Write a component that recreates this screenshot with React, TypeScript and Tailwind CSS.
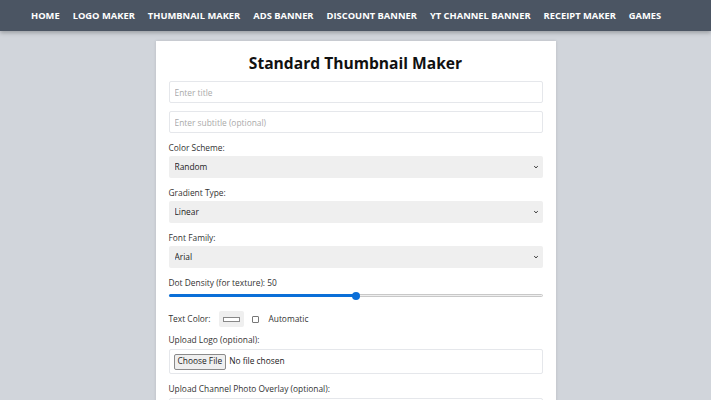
import { useState } from 'react';

const navItems = [
  'HOME',
  'LOGO MAKER',
  'THUMBNAIL MAKER',
  'ADS BANNER',
  'DISCOUNT BANNER',
  'YT CHANNEL BANNER',
  'RECEIPT MAKER',
  'GAMES',
];

function Chevron() {
  return (
    <svg
      className="pointer-events-none absolute right-[4px] top-1/2 -translate-y-1/2"
      width="6"
      height="4"
      viewBox="0 0 6 4"
    >
      <path d="M1.2 1.2l1.8 1.6 1.8-1.6" fill="none" stroke="#333" strokeWidth="1" />
    </svg>
  );
}

function SelectField({ label, value, options }: { label: string; value: string; options: string[] }) {
  return (
    <div className="mb-[9px]">
      <label className="block leading-[12px] mb-[2px] text-[#333]">{label}</label>
      <div className="relative">
        <select
          defaultValue={value}
          className="w-full h-[22px] appearance-none bg-[#efefef] rounded-[2px] pl-[6px] text-[#222] outline-none"
        >
          {options.map((o) => (
            <option key={o}>{o}</option>
          ))}
        </select>
        <Chevron />
      </div>
    </div>
  );
}

function FileField({ label }: { label: string }) {
  return (
    <div className="mb-[9px]">
      <label className="block leading-[12px] mb-[3px] text-[#333]">{label}</label>
      <div className="h-[25px] border border-[#e5e7eb] rounded-[2px] flex items-center px-[4px] text-[#222]">
        <span className="h-[16px] px-[3px] flex items-center bg-[#efefef] border border-[#8a8a8a] rounded-[2px]">
          Choose File
        </span>
        <span className="ml-[3px]">No file chosen</span>
      </div>
    </div>
  );
}

export default function App() {
  const [density] = useState(50);

  return (
    <div className="min-h-screen bg-[#d1d5db] text-[8.4px]" style={{ fontFamily: '"Open Sans", sans-serif' }}>
      <nav className="h-[31px] bg-[#4b5563] shadow-[0_2px_4px_rgba(0,0,0,0.25)] flex items-center pl-[31px] pt-[1px] gap-[13px]">
        {navItems.map((item) => (
          <a key={item} href="#" className="text-white font-bold text-[9.35px]">
            {item}
          </a>
        ))}
      </nav>

      <div className="w-[400px] mx-auto mt-[10px] bg-white shadow-[0_0_3px_rgba(0,0,0,0.12)] px-[13px] pt-[10px] pb-4">
        <h1 className="text-center font-bold text-[15.6px] leading-[24px] text-[#111] mb-[6px]">
          Standard Thumbnail Maker
        </h1>

        <input
          placeholder="Enter title"
          className="block w-full h-[22px] border border-[#e5e7eb] rounded-[2px] px-[5px] mb-[8px] placeholder:text-[#aaa] outline-none"
        />
        <input
          placeholder="Enter subtitle (optional)"
          className="block w-full h-[22px] border border-[#e5e7eb] rounded-[2px] px-[5px] mb-[9px] placeholder:text-[#aaa] outline-none"
        />

        <SelectField label="Color Scheme:" value="Random" options={['Random', 'Warm', 'Cool', 'Dark']} />
        <SelectField label="Gradient Type:" value="Linear" options={['Linear', 'Radial']} />
        <SelectField label="Font Family:" value="Arial" options={['Arial', 'Verdana', 'Georgia']} />

        <div className="mb-[9px]">
          <label className="block leading-[12px] text-[#333]">Dot Density (for texture): {density}</label>
          <div className="relative h-[13px] flex items-center">
            <div className="w-full h-[3px] rounded-full bg-[#efefef] border border-[#c8c8c8]" />
            <div
              className="absolute left-0 h-[3px] rounded-full bg-[#0b6fd8]"
              style={{ width: `${density}%` }}
            />
            <div
              className="absolute w-[8px] h-[8px] rounded-full bg-[#0b6fd8] -translate-x-1/2"
              style={{ left: `${density}%` }}
            />
          </div>
        </div>

        <div className="flex items-center h-[16px] mb-[7px] text-[#333]">
          <span>Text Color:</span>
          <div className="ml-[9px] w-[25px] h-[16px] bg-[#efefef] rounded-[2px] flex items-center justify-center">
            <div className="w-[17px] h-[5px] bg-white border border-[#888]" />
          </div>
          <div className="ml-[8px] w-[7px] h-[7px] border border-[#777] rounded-[1px] bg-white" />
          <span className="ml-[9px]">Automatic</span>
        </div>

        <FileField label="Upload Logo (optional):" />
        <FileField label="Upload Channel Photo Overlay (optional):" />
      </div>
    </div>
  );
}
